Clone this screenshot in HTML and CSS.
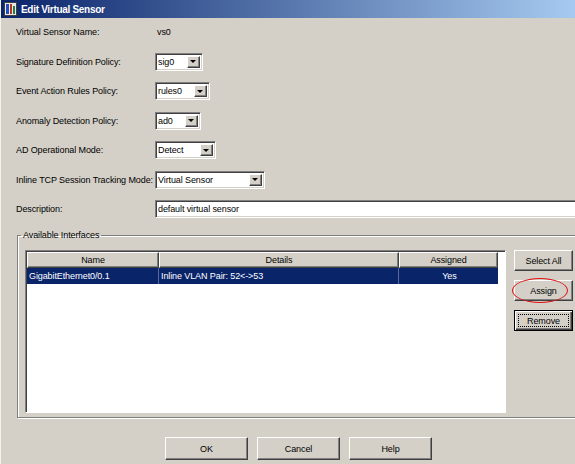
FILE: index.html
```html
<!DOCTYPE html>
<html>
<head>
<meta charset="utf-8">
<title>Edit Virtual Sensor</title>
<link rel="stylesheet" href="styles.css">
</head>
<body>
<div class="dialog">
  <div class="titlebar">
    <svg class="app-icon" width="13" height="14" viewBox="0 0 13 14">
      <rect x="0.5" y="0.5" width="12" height="13" fill="#e8e8e8" stroke="#404040"/>
      <rect x="2" y="2" width="3" height="10" fill="#2050c0"/>
      <rect x="6" y="2" width="2" height="10" fill="#c03020"/>
      <rect x="9" y="4" width="2" height="8" fill="#208040"/>
    </svg>
    <span class="title-text">Edit Virtual Sensor</span>
  </div>

  <div class="form">
    <span class="label">Virtual Sensor Name:</span>
    <span class="value">vs0</span>

    <span class="label">Signature Definition Policy:</span>
    <div class="select w-sig"><span class="sel-val">sig0</span><span class="sel-btn"><i class="arrow"></i></span></div>

    <span class="label">Event Action Rules Policy:</span>
    <div class="select w-rules"><span class="sel-val">rules0</span><span class="sel-btn"><i class="arrow"></i></span></div>

    <span class="label">Anomaly Detection Policy:</span>
    <div class="select w-ad"><span class="sel-val">ad0</span><span class="sel-btn"><i class="arrow"></i></span></div>

    <span class="label">AD Operational Mode:</span>
    <div class="select w-mode"><span class="sel-val">Detect</span><span class="sel-btn"><i class="arrow"></i></span></div>

    <span class="label">Inline TCP Session Tracking Mode:</span>
    <div class="select w-track"><span class="sel-val">Virtual Sensor</span><span class="sel-btn"><i class="arrow"></i></span></div>

    <span class="label">Description:</span>
    <div class="textbox">default virtual sensor</div>
  </div>

  <fieldset class="group">
    <legend>Available Interfaces</legend>
    <div class="group-body">
      <div class="table">
        <div class="thead">
          <div class="th c-name">Name</div>
          <div class="th c-details">Details</div>
          <div class="th c-assigned">Assigned</div>
        </div>
        <div class="tr selected">
          <div class="td c-name">GigabitEthernet0/0.1</div>
          <div class="td c-details">Inline VLAN Pair: 52&lt;-&gt;53</div>
          <div class="td c-assigned center">Yes</div>
        </div>
      </div>
      <div class="side-buttons">
        <div class="btn side">Select All</div>
        <div class="btn side assign">Assign<span class="ellipse"></span></div>
        <div class="btn side focused">Remove</div>
      </div>
    </div>
  </fieldset>

  <div class="footer">
    <div class="btn foot">OK</div>
    <div class="btn foot">Cancel</div>
    <div class="btn foot">Help</div>
  </div>
</div>
</body>
</html>
```

FILE: styles.css
```css
* { box-sizing: border-box; }

html, body {
  margin: 0;
  width: 575px;
  height: 464px;
  overflow: hidden;
}

body {
  background: #d4d0c8;
  font-family: "Liberation Sans", Arial, sans-serif;
  font-size: 9px;
  letter-spacing: -0.1px;
  color: #000;
}

.dialog {
  width: 596px;
  height: 464px;
  border-left: 1px solid #f4f2ee;
}

.titlebar {
  height: 18px;
  display: flex;
  align-items: center;
  gap: 4px;
  padding-left: 3px;
  background: linear-gradient(to right, #0a246a 0, #a6caf0 575px);
  color: #fff;
}

.app-icon { flex: none; }

.title-text {
  font-weight: bold;
  font-size: 10px;
  letter-spacing: -0.3px;
}

.form {
  display: grid;
  grid-template-columns: 139px auto;
  grid-auto-rows: 18px;
  row-gap: 11.5px;
  align-items: center;
  justify-items: start;
  padding: 5px 0 0 15px;
}

.value { padding-left: 2px; }

.select {
  display: flex;
  height: 18px;
  background: #fff;
  border: 1px solid;
  border-color: #808080 #fff #fff #808080;
  box-shadow: inset 1px 1px 0 #404040, inset -1px -1px 0 #d4d0c8;
  padding: 2px;
}

.w-sig { width: 48px; }
.w-rules { width: 55px; }
.w-ad { width: 46px; }
.w-mode { width: 61px; }
.w-track { width: 110px; }

.sel-val {
  flex: 1;
  line-height: 12px;
  padding-left: 0;
  white-space: nowrap;
}

.sel-btn {
  flex: none;
  width: 13px;
  height: 12px;
  background: #d4d0c8;
  border: 1px solid;
  border-color: #fff #404040 #404040 #fff;
  box-shadow: inset -1px -1px 0 #808080;
  display: flex;
  align-items: center;
  justify-content: center;
}

.arrow {
  width: 0;
  height: 0;
  border-left: 3px solid transparent;
  border-right: 3px solid transparent;
  border-top: 3px solid #000;
  margin-left: -1px;
}

.textbox {
  width: 440px;
  height: 18px;
  background: #fff;
  border: 1px solid;
  border-color: #808080 #fff #fff #808080;
  box-shadow: inset 1px 1px 0 #404040, inset -1px -1px 0 #d4d0c8;
  padding: 2px 2px;
  line-height: 12px;
}

.group {
  margin: 11px 0 0 16px;
  padding: 9px 0 4px 7px;
  border: 1px solid #808080;
  box-shadow: 1px 1px 0 #fff, inset 1px 1px 0 #fff;
  min-width: 0;
}

.group legend {
  margin-left: -4px;
  padding: 0 2px;
  line-height: 12px;
}

.group-body {
  display: flex;
  gap: 8px;
}

.table {
  width: 481px;
  height: 163px;
  background: #fff;
  border: 1px solid;
  border-color: #808080 #fff #fff #808080;
  box-shadow: inset 1px 1px 0 #404040;
  padding: 1px 7px 0 1px;
}

.thead, .tr {
  display: flex;
  height: 16px;
}

.th {
  background: #d4d0c8;
  border: 1px solid;
  border-color: #fff #404040 #404040 #fff;
  box-shadow: inset -1px -1px 0 #808080;
  text-align: center;
  line-height: 14px;
}

.c-name { width: 132px; }
.c-details { width: 240px; }
.c-assigned { width: 99px; }

.tr.selected {
  background: #0a246a;
  color: #fff;
}

.td {
  line-height: 16px;
  padding-left: 2px;
  border-right: 1px solid #5a6a98;
  white-space: nowrap;
}

.td.center { text-align: center; border-right: none; }

.btn {
  background: #d4d0c8;
  border: 1px solid;
  border-color: #fff #404040 #404040 #fff;
  box-shadow: inset -1px -1px 0 #808080;
  display: flex;
  align-items: center;
  justify-content: center;
}

.side-buttons {
  display: flex;
  flex-direction: column;
  gap: 9px;
  width: 59px;
}

.btn.side {
  height: 21px;
}

.btn.focused {
  border-color: #000;
  box-shadow: inset 1px 1px 0 #fff, inset -1px -1px 0 #404040, inset -2px -2px 0 #808080;
  outline: 1px dotted #000;
  outline-offset: -5px;
}

.assign { position: relative; }

.ellipse {
  position: absolute;
  left: -3px;
  top: -3px;
  width: 56px;
  height: 25px;
  border: 1.5px solid #e01010;
  border-radius: 50%;
}

.footer {
  display: flex;
  justify-content: center;
  gap: 9px;
  margin-top: 19px;
}

.btn.foot {
  width: 83px;
  height: 23px;
}
```
